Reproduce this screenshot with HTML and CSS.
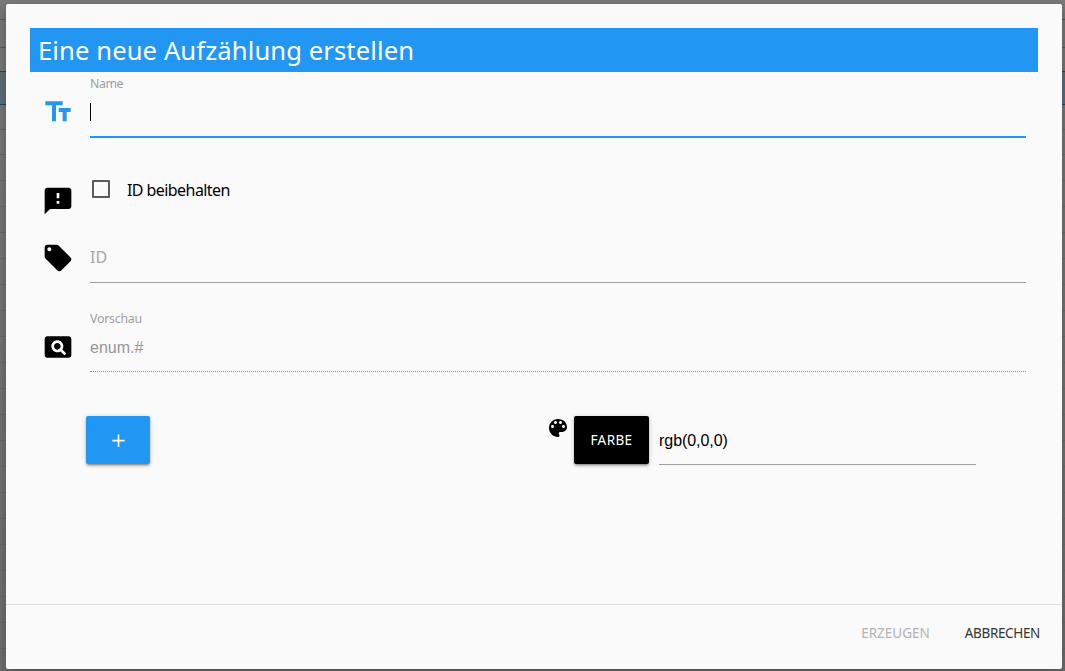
FILE: index.html
```
<!DOCTYPE html>
<html lang="de">
<head>
<meta charset="utf-8">
<title>Eine neue Aufzählung erstellen</title>
<link rel="stylesheet" href="styles.css">
</head>
<body>
<div class="page"><div class="strip strip-a"></div><div class="strip strip-b"></div><div class="strip strip-selected"></div><div class="strip strip-c"></div><div class="strip strip-c"></div><div class="rows"></div></div>
<main class="modal">
  <div class="content">
    <h1 class="title"><span>Eine neue Aufzählung erstellen</span></h1>
    <div class="row row-name">
      <svg class="icon active" viewBox="0 0 24 24"><path d="M2.5 4v3h5v12h3V7h5V4h-13zm19 5h-9v3h3v7h3v-7h3V9z"/></svg>
      <div class="field focus"><label class="label label-name">Name</label><div class="caret"></div></div>
    </div>
    <div class="row row-check">
      <svg class="icon" viewBox="0 0 24 24"><path d="M20 2H4c-1.1 0-1.99.9-1.99 2L2 22l4-4h14c1.1 0 2-.9 2-2V4c0-1.1-.9-2-2-2zm-7 12h-2v-2h2v2zm0-4h-2V6h2v4z"/></svg>
      <div class="check"><span class="box"></span><span class="check-text">ID beibehalten</span></div>
    </div>
    <div class="row row-id">
      <svg class="icon" viewBox="0 0 24 24"><path d="M21.41 11.58l-9-9C12.05 2.22 11.55 2 11 2H4c-1.1 0-2 .9-2 2v7c0 .55.22 1.05.59 1.42l9 9c.36.36.86.58 1.41.58.55 0 1.05-.22 1.41-.59l7-7c.37-.36.59-.86.59-1.41 0-.55-.23-1.06-.59-1.42zM5.5 7C4.67 7 4 6.33 4 5.5S4.67 4 5.5 4 7 4.67 7 5.5 6.33 7 5.5 7z"/></svg>
      <div class="field"><span class="placeholder">ID</span></div>
    </div>
    <div class="row row-preview">
      <svg class="icon" viewBox="0 0 24 24"><path d="M11.5 9C10.12 9 9 10.12 9 11.5s1.12 2.5 2.5 2.5 2.5-1.12 2.5-2.5S12.88 9 11.5 9zM20 4H4c-1.1 0-2 .9-2 2v12c0 1.1.9 2 2 2h16c1.1 0 2-.9 2-2V6c0-1.1-.9-2-2-2zm-3.21 14.21l-2.91-2.91c-.69.44-1.51.7-2.39.7C9.01 16 7 13.99 7 11.5S9.01 7 11.5 7 16 9.01 16 11.5c0 .88-.26 1.69-.7 2.39l2.91 2.9-1.42 1.42z"/></svg>
      <div class="field disabled"><label class="label label-preview">Vorschau</label><span class="value">enum.#</span></div>
    </div>
    <div class="actions">
      <div class="btn btn-add"><svg class="plus" viewBox="0 0 24 24"><path d="M19 13h-6v6h-2v-6H5v-2h6V5h2v6h6v2z"/></svg></div>
      <div class="color">
        <svg class="palette" viewBox="0 0 24 24"><path d="M12 3c-4.97 0-9 4.03-9 9s4.03 9 9 9c.83 0 1.5-.67 1.5-1.5 0-.39-.15-.74-.39-1.01-.23-.26-.38-.61-.38-.99 0-.83.67-1.5 1.5-1.5H16c2.76 0 5-2.24 5-5 0-4.42-4.03-8-9-8zm-5.5 9c-.83 0-1.5-.67-1.5-1.5S5.67 9 6.5 9 8 9.67 8 10.5 7.33 12 6.5 12zm3-4C8.67 8 8 7.33 8 6.5S8.67 5 9.5 5s1.5.67 1.5 1.5S10.33 8 9.5 8zm5 0c-.83 0-1.5-.67-1.5-1.5S13.67 5 14.5 5s1.5.67 1.5 1.5S15.33 8 14.5 8zm3 4c-.83 0-1.5-.67-1.5-1.5S16.67 9 17.5 9s1.5.67 1.5 1.5-.67 1.5-1.5 1.5z"/></svg>
        <div class="btn btn-color"><span>FARBE</span></div>
        <div class="color-input"><span>rgb(0,0,0)</span></div>
      </div>
    </div>
  </div>
  <footer class="footer"><span class="create">ERZEUGEN</span><span class="cancel">ABBRECHEN</span></footer>
</main>
</body>
</html>
```
FILE: styles.css
```
* { box-sizing: border-box; }
body { margin: 0; height: 671px; overflow: hidden; display: flex; background: #6b6b6b; font-family: "Noto Sans", sans-serif; }
/* dimmed page rows behind the dialog */
.page { position: absolute; inset: 0; display: flex; flex-direction: column; background: linear-gradient(#7a7a7a, #707070); }
.strip { flex: none; border-bottom: 1px solid #5a5a5a; }
.strip-a { height: 20px; }
.strip-b { height: 28px; }
.strip-selected { height: 34px; margin-top: 23px; background: #5f6f79; border-top: 1px solid #0e4b70; border-bottom-color: #0e4b70; }
.strip-c { height: 25px; border-color: #686868; }
.rows { flex: 1; background: repeating-linear-gradient(transparent 0 25px, #6a6a6a 25px 26px); }
.modal { position: relative; width: 1056px; height: 665px; margin: 4px 0 0 6px; flex: none; border-radius: 2px; background: #fafafa; box-shadow: 0 8px 10px 1px rgba(0,0,0,.14), 0 3px 14px 2px rgba(0,0,0,.12); display: flex; flex-direction: column; }
.content { height: 600px; padding: 24px; }
.title { width: 1008px; height: 44px; margin: 0; padding-left: 8px; background: #2196f3; color: #fff; font-size: 25.6px; font-weight: 400; line-height: 45px; letter-spacing: .1px; white-space: nowrap; }
.row { display: flex; padding-left: 12px; }
.icon { width: 32px; height: 32px; margin-right: 16px; flex: none; }
.active { fill: #2196f3; }
.field { width: 936px; display: flex; flex-direction: column; border-bottom: 1px solid #9e9e9e; }
.label { color: #9e9e9e; font-size: 12.3px; line-height: 16px; letter-spacing: -.2px; }
.row-name { height: 66px; }
.row-name .icon { margin-top: 24px; }
.label-name { margin-top: 4px; letter-spacing: -.4px; }
.focus { border-bottom: 2px solid #2196f3; }
.caret { width: 1px; height: 18px; margin-top: 11px; background: #000; }
.row-check { height: 82px; padding-top: 42px; }
.row-check .icon { margin-top: 5px; }
.check { display: flex; height: 20px; margin-left: 2px; }
.box { width: 18px; height: 18px; border: 2px solid #5a5a5a; border-radius: 1px; }
.check-text { margin-left: 17px; font-size: 16px; line-height: 21px; letter-spacing: -.57px; }
.row-id { height: 63px; }
.row-id .icon { margin-top: 22px; }
.placeholder { margin-top: 26px; color: #a5a5a5; font-size: 16px; line-height: 23px; letter-spacing: .1px; }
.row-preview { height: 89px; padding-top: 27px; }
.row-preview .icon { margin-top: 21px; }
.disabled { border-bottom: 1px dotted #8e8e8e; }
.label-preview { margin-top: 1px; }
.value { margin-top: 11px; color: #959595; font: 16px/20px "Liberation Sans", sans-serif; }
.actions { display: flex; justify-content: space-between; margin: 44px 62px 0 56px; height: 49px; }
.btn { height: 48px; display: flex; align-items: center; justify-content: center; border-radius: 2px; color: #fff; box-shadow: 0 2px 2px rgba(0,0,0,.18), 0 3px 1px -2px rgba(0,0,0,.15), 0 1px 5px rgba(0,0,0,.2); }
.btn-add { width: 64px; background: #2196f3; }
.plus { width: 21px; height: 21px; margin-left: 1px; fill: #fff; }
.color { display: flex; width: 430px; }
.palette { width: 24px; height: 24px; margin-right: 4px; flex: none; }
.btn-color { width: 75px; flex: none; background: #000; font-size: 13.5px; letter-spacing: .4px; }
.color-input { width: 317px; height: 49px; margin-left: 10px; flex: none; border-bottom: 1px solid #9e9e9e; font: 16px/49px "Liberation Sans", sans-serif; letter-spacing: -.05px; }
.footer { height: 65px; display: flex; justify-content: flex-end; gap: 35px; padding-right: 22px; border-top: 1px solid #dfdfdf; font-size: 13.5px; line-height: 57px; letter-spacing: -.35px; }
.create { color: #b3b3b3; letter-spacing: 0; }
.cancel { color: #343434; }
```
